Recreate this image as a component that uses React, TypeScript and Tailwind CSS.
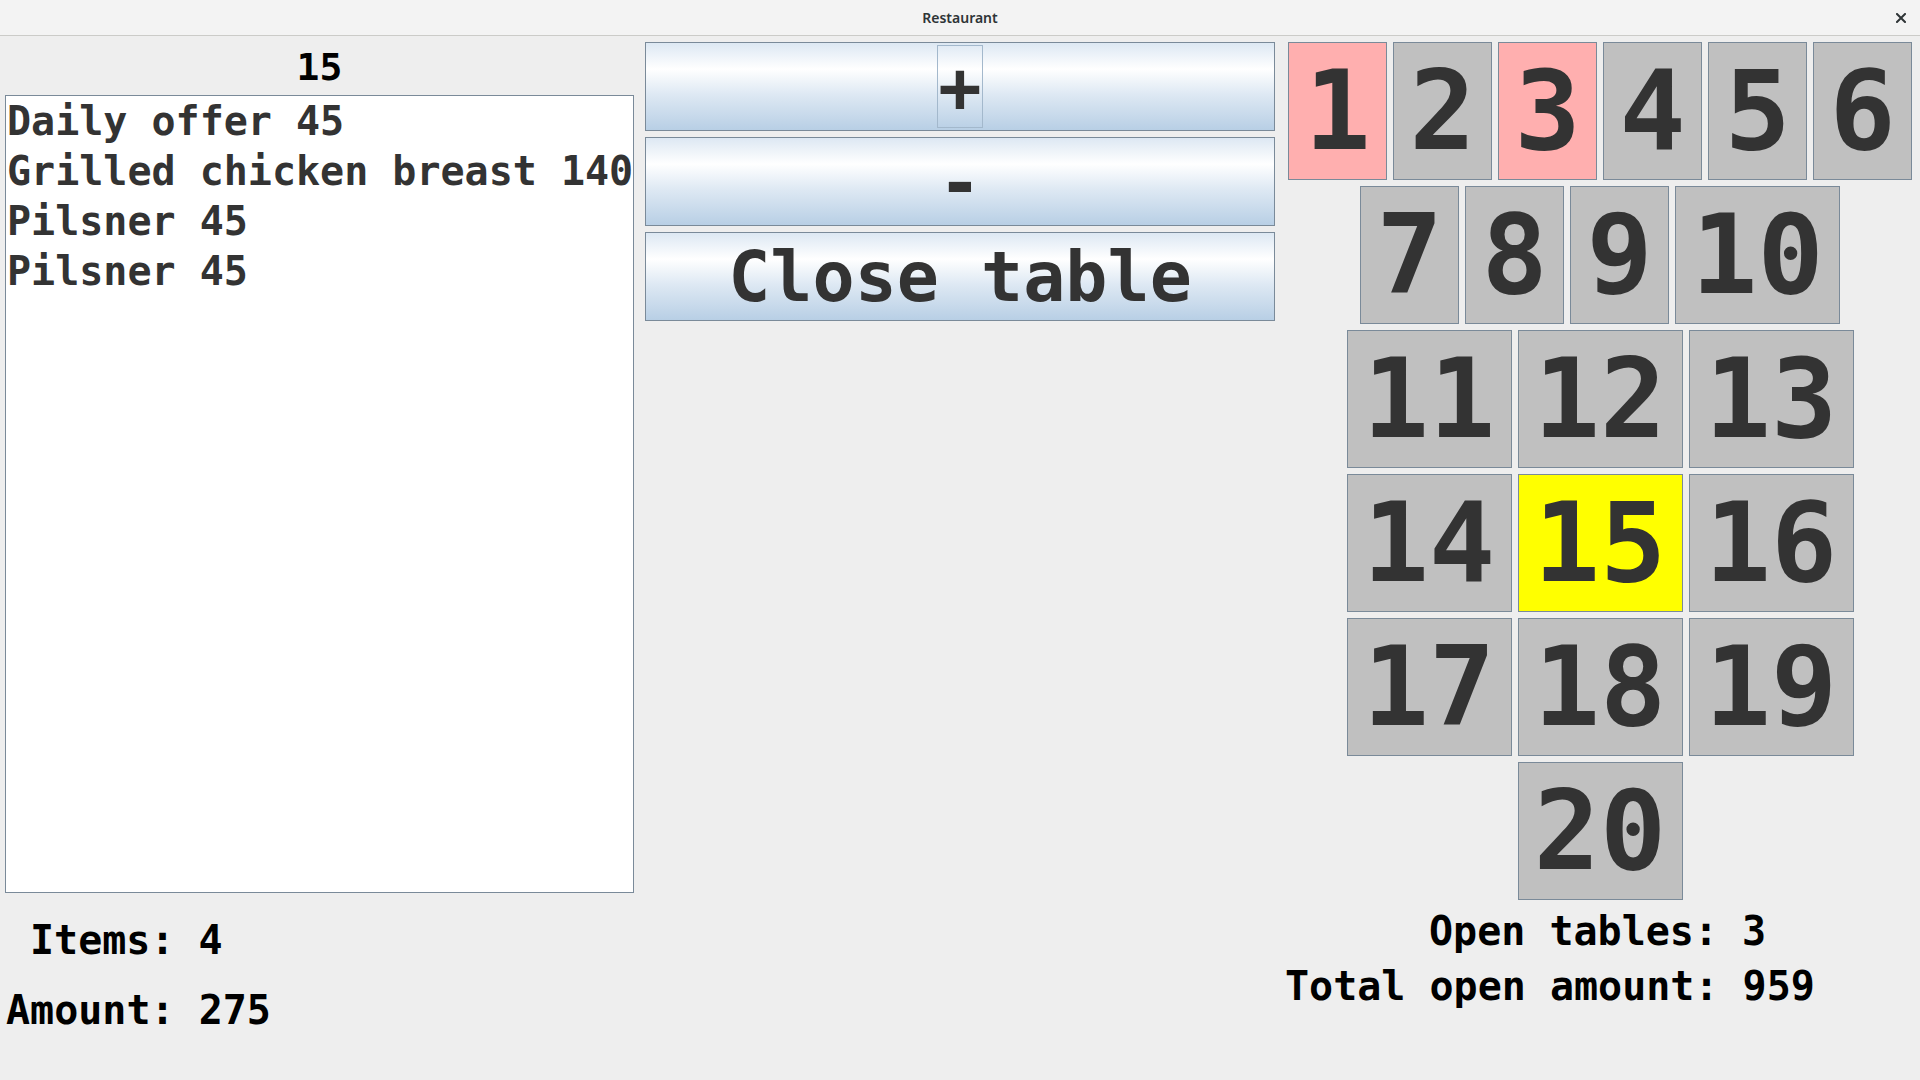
const orderLines = ["Daily offer 45", "Grilled chicken breast 140", "Pilsner 45", "Pilsner 45"];

const openTables = [1, 3];
const activeTable = 15;

// rows of tables, as they wrap in the window
const tableRows: number[][] = [
  [1, 2, 3, 4, 5, 6],
  [7, 8, 9, 10],
  [11, 12, 13],
  [14, 15, 16],
  [17, 18, 19],
  [20],
];

const mono = "font-['DejaVu_Sans_Mono',monospace] font-bold";
const oceanButton =
  "border border-[#7a8a99] bg-[linear-gradient(to_bottom,#dde8f3_0%,#ffffff_30%,#dde8f3_60%,#b8cfe5_100%)] text-[#333333]";

function TableButton({ n }: { n: number }) {
  const wide = n >= 10;
  let color = "bg-[#c0c0c0]";
  if (n === activeTable) color = "bg-[#ffff00]";
  else if (openTables.includes(n)) color = "bg-[#ffafaf]";

  return (
    <button
      className={`${wide ? "w-[165px]" : "w-[99px]"} h-[138px] ${color} border border-[#7a8a99] flex items-center justify-center text-[110px] leading-none text-[#333333]`}
    >
      {n}
    </button>
  );
}

export default function App() {
  return (
    <div className="w-[1920px] h-[1080px] bg-[#eeeeee] flex flex-col overflow-hidden">
      {/* window title bar */}
      <div className="h-[36px] shrink-0 bg-[#f3f3f3] border-b border-[#cbcbc8] grid grid-cols-[1fr_auto_1fr] items-center">
        <div />
        <div className="font-['Noto_Sans',sans-serif] font-semibold text-[14px] text-[#2e3436] pb-[1px]">Restaurant</div>
        <div className="flex justify-end pr-[14px]">
          <svg width="10" height="10" viewBox="0 0 10 10">
            <path d="M1 1 L9 9 M9 1 L1 9" stroke="#2e3436" strokeWidth="2" strokeLinecap="square" />
          </svg>
        </div>
      </div>

      <div className={`grid grid-cols-3 flex-1 ${mono}`}>
        {/* current order */}
        <div className="flex flex-col pl-[5px] pr-[6px]">
          <div className="h-[59px] flex items-center justify-center pt-[2px] text-[38px] leading-none text-black">15</div>
          <div className="h-[798px] border border-[#7a8a99] bg-white pl-[1px] text-[40px] leading-[50px] text-[#333333] overflow-hidden">
            {orderLines.map((line, i) => (
              <div key={i} className="whitespace-pre">{line}</div>
            ))}
          </div>
          <div className="mt-[22px] flex flex-col gap-[20px] pl-[1px] text-[40px] leading-[50px] text-black">
            <div className="ml-[24px]">Items: 4</div>
            <div>Amount: 275</div>
          </div>
        </div>

        {/* actions */}
        <div className="flex flex-col gap-[6px] px-[5px] pt-[6px]">
          <button className={`${oceanButton} h-[89px] flex items-center justify-center p-[2px] text-[72px] leading-none`}>
            <span className="h-full flex items-center border border-[#a3b8cc]">+</span>
          </button>
          <button className={`${oceanButton} h-[89px] flex items-center justify-center text-[72px] leading-none`}>-</button>
          <button className={`${oceanButton} h-[89px] flex items-center justify-center text-[70px] leading-none`}>Close table</button>
        </div>

        {/* tables */}
        <div className="flex flex-col">
          <div className="flex flex-col items-center gap-[6px] pt-[6px]">
            {tableRows.map((row, i) => (
              <div key={i} className="flex gap-[6px]">
                {row.map((n) => (
                  <TableButton key={n} n={n} />
                ))}
              </div>
            ))}
          </div>
          <div className="mt-[4px] pl-[5px] text-[40px] leading-[55px] text-black">
            <div className="ml-[144px]">Open tables: 3</div>
            <div>Total open amount: 959</div>
          </div>
        </div>
      </div>
    </div>
  );
}
